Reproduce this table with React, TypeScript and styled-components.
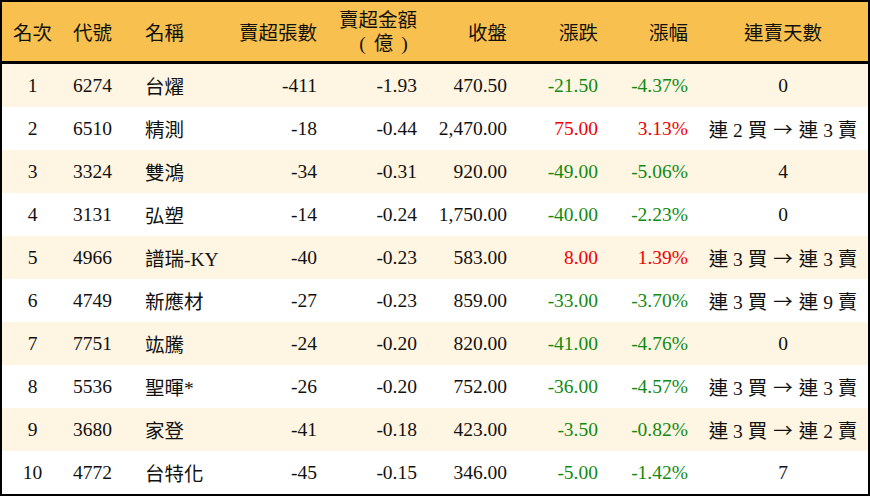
import React from 'react';
import styled, { createGlobalStyle } from 'styled-components';

const GlobalStyle = createGlobalStyle`
  html, body {
    margin: 0;
    padding: 0;
    background: #ffffff;
  }
  body {
    font-family: "Liberation Serif", "Noto Sans CJK TC", serif;
  }
`;

const COLS = '61px 72px 90px 102px 100px 90px 91px 90px 1fr';

const Table = styled.div`
  width: 870px;
  height: 496px;
  box-sizing: border-box;
  border: 2px solid #000;
  background: #fff;
  color: #111;
  font-size: 19.5px;
`;

const HeaderRow = styled.div`
  display: grid;
  grid-template-columns: ${COLS};
  height: 62px;
  box-sizing: border-box;
  background: #f8c14f;
  border-bottom: 3px solid #000;
`;

const Row = styled.div<{ $alt: boolean }>`
  display: grid;
  grid-template-columns: ${COLS};
  height: 43px;
  background: ${(p) => (p.$alt ? '#fef5e2' : '#ffffff')};
`;

type Align = 'left' | 'right' | 'center';

const Cell = styled.div<{ $align: Align; $tone?: 'up' | 'down' }>`
  display: flex;
  align-items: center;
  justify-content: ${(p) => (p.$align === 'left' ? 'flex-start' : p.$align === 'right' ? 'flex-end' : 'center')};
  padding: 0 10px;
  white-space: nowrap;
  color: ${(p) => (p.$tone === 'up' ? '#f00000' : p.$tone === 'down' ? '#118a11' : '#111')};
`;

const HeadCell = styled(Cell)`
  color: #111;
`;

const TwoLine = styled.span`
  display: flex;
  flex-direction: column;
  align-items: center;
  line-height: 23px;
`;

const SubLine = styled.span`
  display: flex;
  gap: 8px;
  padding-left: 11px;
`;

const Arrow = styled.span`
  font-family: "Noto Sans CJK TC", sans-serif;
  margin: 0 6px;
`;

type Item = {
  rank: number;
  code: string;
  name: string;
  lots: string;
  amount: string;
  close: string;
  change: string;
  pct: string;
  streak: string;
};

const rows: Item[] = [
  { rank: 1, code: '6274', name: '台燿', lots: '-411', amount: '-1.93', close: '470.50', change: '-21.50', pct: '-4.37%', streak: '0' },
  { rank: 2, code: '6510', name: '精測', lots: '-18', amount: '-0.44', close: '2,470.00', change: '75.00', pct: '3.13%', streak: '連 2 買 → 連 3 賣' },
  { rank: 3, code: '3324', name: '雙鴻', lots: '-34', amount: '-0.31', close: '920.00', change: '-49.00', pct: '-5.06%', streak: '4' },
  { rank: 4, code: '3131', name: '弘塑', lots: '-14', amount: '-0.24', close: '1,750.00', change: '-40.00', pct: '-2.23%', streak: '0' },
  { rank: 5, code: '4966', name: '譜瑞-KY', lots: '-40', amount: '-0.23', close: '583.00', change: '8.00', pct: '1.39%', streak: '連 3 買 → 連 3 賣' },
  { rank: 6, code: '4749', name: '新應材', lots: '-27', amount: '-0.23', close: '859.00', change: '-33.00', pct: '-3.70%', streak: '連 3 買 → 連 9 賣' },
  { rank: 7, code: '7751', name: '竑騰', lots: '-24', amount: '-0.20', close: '820.00', change: '-41.00', pct: '-4.76%', streak: '0' },
  { rank: 8, code: '5536', name: '聖暉*', lots: '-26', amount: '-0.20', close: '752.00', change: '-36.00', pct: '-4.57%', streak: '連 3 買 → 連 3 賣' },
  { rank: 9, code: '3680', name: '家登', lots: '-41', amount: '-0.18', close: '423.00', change: '-3.50', pct: '-0.82%', streak: '連 3 買 → 連 2 賣' },
  { rank: 10, code: '4772', name: '台特化', lots: '-45', amount: '-0.15', close: '346.00', change: '-5.00', pct: '-1.42%', streak: '7' },
];

const tone = (v: string) => (v.startsWith('-') ? 'down' : 'up');

const renderStreak = (s: string) => {
  const parts = s.split('→');
  if (parts.length < 2) return s;
  return (
    <span>
      {parts[0].trimEnd()}
      <Arrow>→</Arrow>
      {parts[1].trimStart()}
    </span>
  );
};

export default function App() {
  return (
    <>
      <GlobalStyle />
      <Table>
        <HeaderRow>
          <HeadCell $align="center">名次</HeadCell>
          <HeadCell $align="left">代號</HeadCell>
          <HeadCell $align="left">名稱</HeadCell>
          <HeadCell $align="right">賣超張數</HeadCell>
          <HeadCell $align="right">
            <TwoLine>
              <span>賣超金額</span>
              <SubLine>
                <span>(</span>
                <span>億</span>
                <span>)</span>
              </SubLine>
            </TwoLine>
          </HeadCell>
          <HeadCell $align="right">收盤</HeadCell>
          <HeadCell $align="right">漲跌</HeadCell>
          <HeadCell $align="right">漲幅</HeadCell>
          <HeadCell $align="center">連賣天數</HeadCell>
        </HeaderRow>
        {rows.map((r, i) => (
          <Row key={r.code} $alt={i % 2 === 0}>
            <Cell $align="center">{r.rank}</Cell>
            <Cell $align="left">{r.code}</Cell>
            <Cell $align="left">{r.name}</Cell>
            <Cell $align="right">{r.lots}</Cell>
            <Cell $align="right">{r.amount}</Cell>
            <Cell $align="right">{r.close}</Cell>
            <Cell $align="right" $tone={tone(r.change)}>{r.change}</Cell>
            <Cell $align="right" $tone={tone(r.pct)}>{r.pct}</Cell>
            <Cell $align="center">{renderStreak(r.streak)}</Cell>
          </Row>
        ))}
      </Table>
    </>
  );
}
